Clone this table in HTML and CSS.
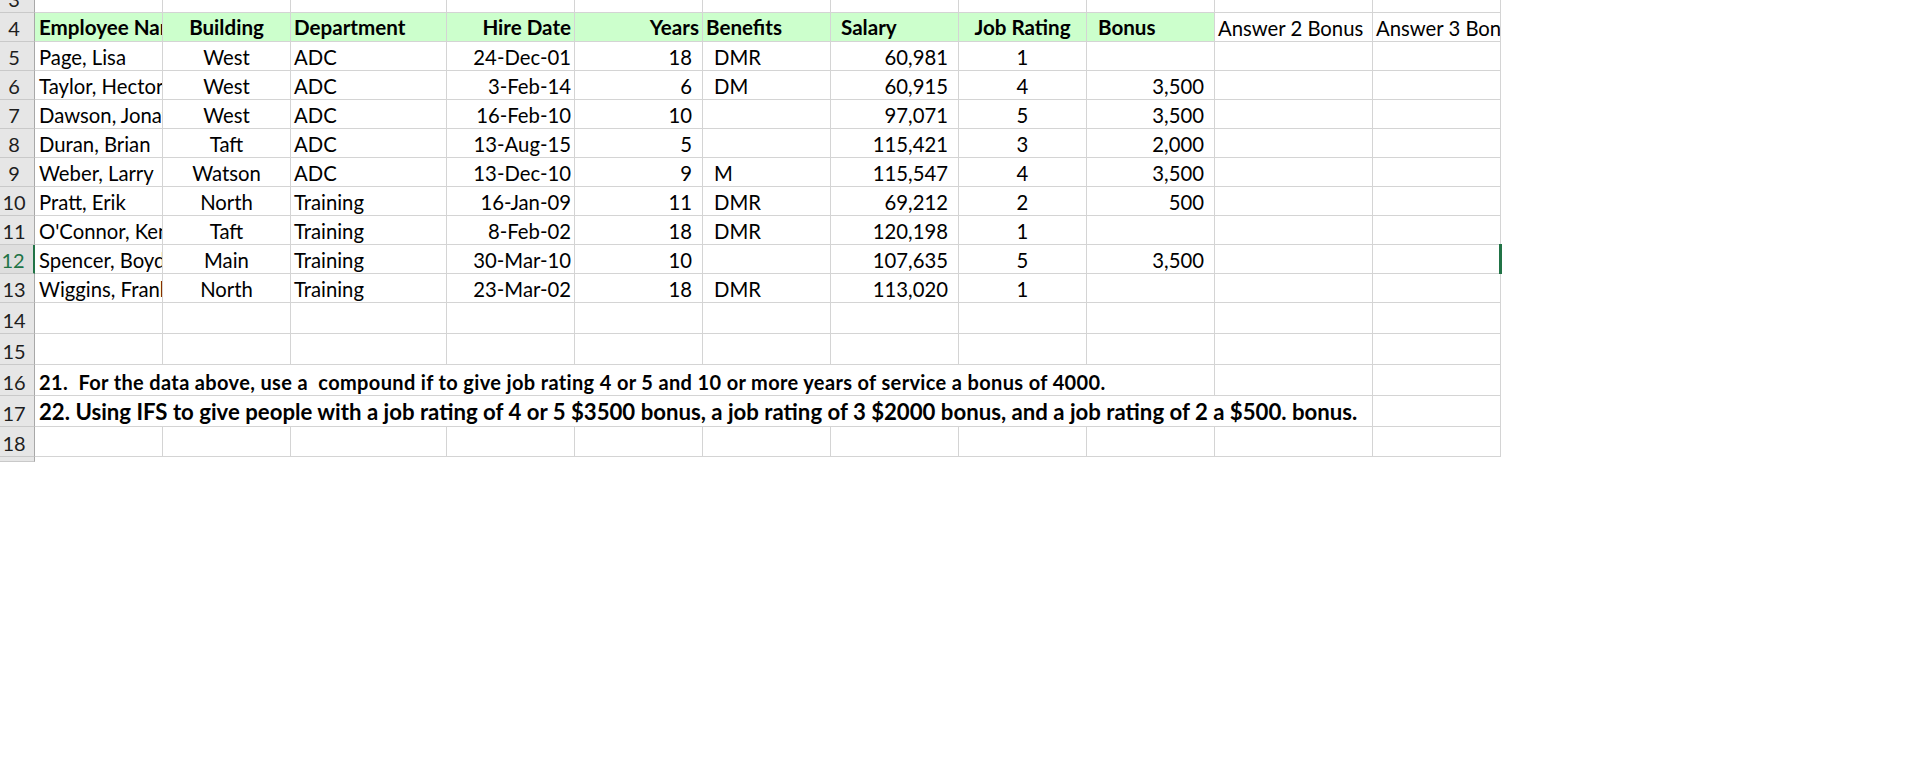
FILE: index.html
```html
<!DOCTYPE html>
<html>
<head>
<meta charset="utf-8">
<title>Sheet</title>
<link rel="stylesheet" href="styles.css">
</head>
<body>
<div class="sheet">
  <div class="row">
    <div class="c rh">3</div>
    <div class="c"></div><div class="c"></div><div class="c"></div><div class="c"></div><div class="c"></div><div class="c"></div><div class="c"></div><div class="c"></div><div class="c"></div><div class="c"></div><div class="c"></div>
  </div>
  <div class="row head">
    <div class="c rh">4</div>
    <div class="c g b pa">Employee Name</div>
    <div class="c g b ctr">Building</div>
    <div class="c g b pc">Department</div>
    <div class="c g b r pd">Hire Date</div>
    <div class="c g b r pd">Years</div>
    <div class="c g b pc">Benefits</div>
    <div class="c g b pg">Salary</div>
    <div class="c g b ctr">Job Rating</div>
    <div class="c g b pi">Bonus</div>
    <div class="c pc">Answer 2 Bonus</div>
    <div class="c pc">Answer 3 Bonus</div>
  </div>

  <div class="row">
    <div class="c rh">5</div>
    <div class="c pa">Page, Lisa</div><div class="c ctr">West</div><div class="c pc">ADC</div><div class="c r pd">24-Dec-01</div><div class="c r pn">18</div><div class="c pf">DMR</div><div class="c r pn">60,981</div><div class="c ctr">1</div><div class="c r pn"></div><div class="c"></div><div class="c"></div>
  </div>
  <div class="row">
    <div class="c rh">6</div>
    <div class="c pa">Taylor, Hector</div><div class="c ctr">West</div><div class="c pc">ADC</div><div class="c r pd">3-Feb-14</div><div class="c r pn">6</div><div class="c pf">DM</div><div class="c r pn">60,915</div><div class="c ctr">4</div><div class="c r pn">3,500</div><div class="c"></div><div class="c"></div>
  </div>
  <div class="row">
    <div class="c rh">7</div>
    <div class="c pa">Dawson, Jonathan</div><div class="c ctr">West</div><div class="c pc">ADC</div><div class="c r pd">16-Feb-10</div><div class="c r pn">10</div><div class="c pf"></div><div class="c r pn">97,071</div><div class="c ctr">5</div><div class="c r pn">3,500</div><div class="c"></div><div class="c"></div>
  </div>
  <div class="row">
    <div class="c rh">8</div>
    <div class="c pa">Duran, Brian</div><div class="c ctr">Taft</div><div class="c pc">ADC</div><div class="c r pd">13-Aug-15</div><div class="c r pn">5</div><div class="c pf"></div><div class="c r pn">115,421</div><div class="c ctr">3</div><div class="c r pn">2,000</div><div class="c"></div><div class="c"></div>
  </div>
  <div class="row">
    <div class="c rh">9</div>
    <div class="c pa">Weber, Larry</div><div class="c ctr">Watson</div><div class="c pc">ADC</div><div class="c r pd">13-Dec-10</div><div class="c r pn">9</div><div class="c pf">M</div><div class="c r pn">115,547</div><div class="c ctr">4</div><div class="c r pn">3,500</div><div class="c"></div><div class="c"></div>
  </div>
  <div class="row">
    <div class="c rh">10</div>
    <div class="c pa">Pratt, Erik</div><div class="c ctr">North</div><div class="c pc">Training</div><div class="c r pd">16-Jan-09</div><div class="c r pn">11</div><div class="c pf">DMR</div><div class="c r pn">69,212</div><div class="c ctr">2</div><div class="c r pn">500</div><div class="c"></div><div class="c"></div>
  </div>
  <div class="row">
    <div class="c rh">11</div>
    <div class="c pa">O'Connor, Kenneth</div><div class="c ctr">Taft</div><div class="c pc">Training</div><div class="c r pd">8-Feb-02</div><div class="c r pn">18</div><div class="c pf">DMR</div><div class="c r pn">120,198</div><div class="c ctr">1</div><div class="c r pn"></div><div class="c"></div><div class="c"></div>
  </div>
  <div class="row">
    <div class="c rh sel">12</div>
    <div class="c pa">Spencer, Boyd</div><div class="c ctr">Main</div><div class="c pc">Training</div><div class="c r pd">30-Mar-10</div><div class="c r pn">10</div><div class="c pf"></div><div class="c r pn">107,635</div><div class="c ctr">5</div><div class="c r pn">3,500</div><div class="c"></div><div class="c edge"></div>
  </div>
  <div class="row">
    <div class="c rh">13</div>
    <div class="c pa">Wiggins, Frank</div><div class="c ctr">North</div><div class="c pc">Training</div><div class="c r pd">23-Mar-02</div><div class="c r pn">18</div><div class="c pf">DMR</div><div class="c r pn">113,020</div><div class="c ctr">1</div><div class="c r pn"></div><div class="c"></div><div class="c"></div>
  </div>

  <div class="row tall">
    <div class="c rh">14</div>
    <div class="c"></div><div class="c"></div><div class="c"></div><div class="c"></div><div class="c"></div><div class="c"></div><div class="c"></div><div class="c"></div><div class="c"></div><div class="c"></div><div class="c"></div>
  </div>
  <div class="row tall">
    <div class="c rh">15</div>
    <div class="c"></div><div class="c"></div><div class="c"></div><div class="c"></div><div class="c"></div><div class="c"></div><div class="c"></div><div class="c"></div><div class="c"></div><div class="c"></div><div class="c"></div>
  </div>
  <div class="row tall">
    <div class="c rh">16</div>
    <div class="c pa note q21">21.&nbsp; For the data above, use a&nbsp; compound if to give job rating 4 or 5 and 10 or more years of service a bonus of 4000.</div>
    <div class="c"></div><div class="c"></div>
  </div>
  <div class="row tall">
    <div class="c rh">17</div>
    <div class="c pa note q22">22. Using IFS to give people with a job rating of 4 or 5 $3500 bonus, a job rating of 3 $2000 bonus, and a job rating of 2 a $500. bonus.</div>
    <div class="c"></div>
  </div>
  <div class="row last">
    <div class="c rh">18</div>
    <div class="c"></div><div class="c"></div><div class="c"></div><div class="c"></div><div class="c"></div><div class="c"></div><div class="c"></div><div class="c"></div><div class="c"></div><div class="c"></div><div class="c"></div>
  </div>
  <div class="row stub">
    <div class="rh stubcell"></div>
  </div>
</div>
</body>
</html>
```

FILE: styles.css
```css
* {
  box-sizing: border-box;
}

html,
body {
  margin: 0;
  padding: 0;
  background: #ffffff;
}

body {
  font-family: Lato, "Liberation Sans", sans-serif;
  color: #000000;
  overflow: hidden;
}

.sheet {
  width: 1501px;
  margin-top: -16px;
}

.row {
  display: grid;
  grid-template-columns: 35px 128px 128px 156px 128px 128px 128px 128px 128px 128px 158px 128px;
  height: 29px;
}

.row.tall {
  height: 31px;
}

.row.last {
  height: 30px;
}

.row.stub {
  height: 5px;
}

.c {
  display: flex;
  align-items: flex-end;
  justify-content: flex-start;
  padding: 0 3px 3px 3px;
  border-right: 1px solid #d4d4d4;
  border-bottom: 1px solid #d4d4d4;
  overflow: hidden;
  white-space: nowrap;
  font-size: 20.3px;
  line-height: 1;
}

.rh {
  background: #e6e6e6;
  border-right: 1px solid #a8a8a8;
  border-bottom: 1px solid #c9c9c9;
  justify-content: center;
  padding-right: 6px;
  padding-left: 0;
  color: #1e1e1e;
  font-size: 20px;
}

.rh.sel {
  color: #217346;
  background: #dedede;
  border-right: 2px solid #217346;
  padding-right: 7px;
}

.stubcell {
  background: #e6e6e6;
  border-right: 1px solid #a8a8a8;
}

.g {
  background: #ccffcc;
}

.b {
  font-weight: 700;
  font-size: 20.6px;
}

.ctr {
  justify-content: center;
}

.r {
  justify-content: flex-end;
}

.pa {
  padding-left: 4px;
}

.pc {
  padding-left: 3px;
}

.pd {
  padding-right: 3px;
}

.pn {
  padding-right: 10px;
}

.pf {
  padding-left: 11px;
}

.pg {
  padding-left: 10px;
}

.pi {
  padding-left: 11px;
}

.note {
  font-weight: 700;
  overflow: visible;
}

.q21 {
  grid-column: 2 / 11;
  font-size: 20px;
  letter-spacing: 0.35px;
}

.q22 {
  grid-column: 2 / 12;
  font-size: 22.2px;
}

.edge {
  position: relative;
  overflow: visible;
}

.edge::after {
  content: "";
  position: absolute;
  top: -1px;
  bottom: -1px;
  right: -2px;
  width: 3px;
  background: #217346;
}
```
